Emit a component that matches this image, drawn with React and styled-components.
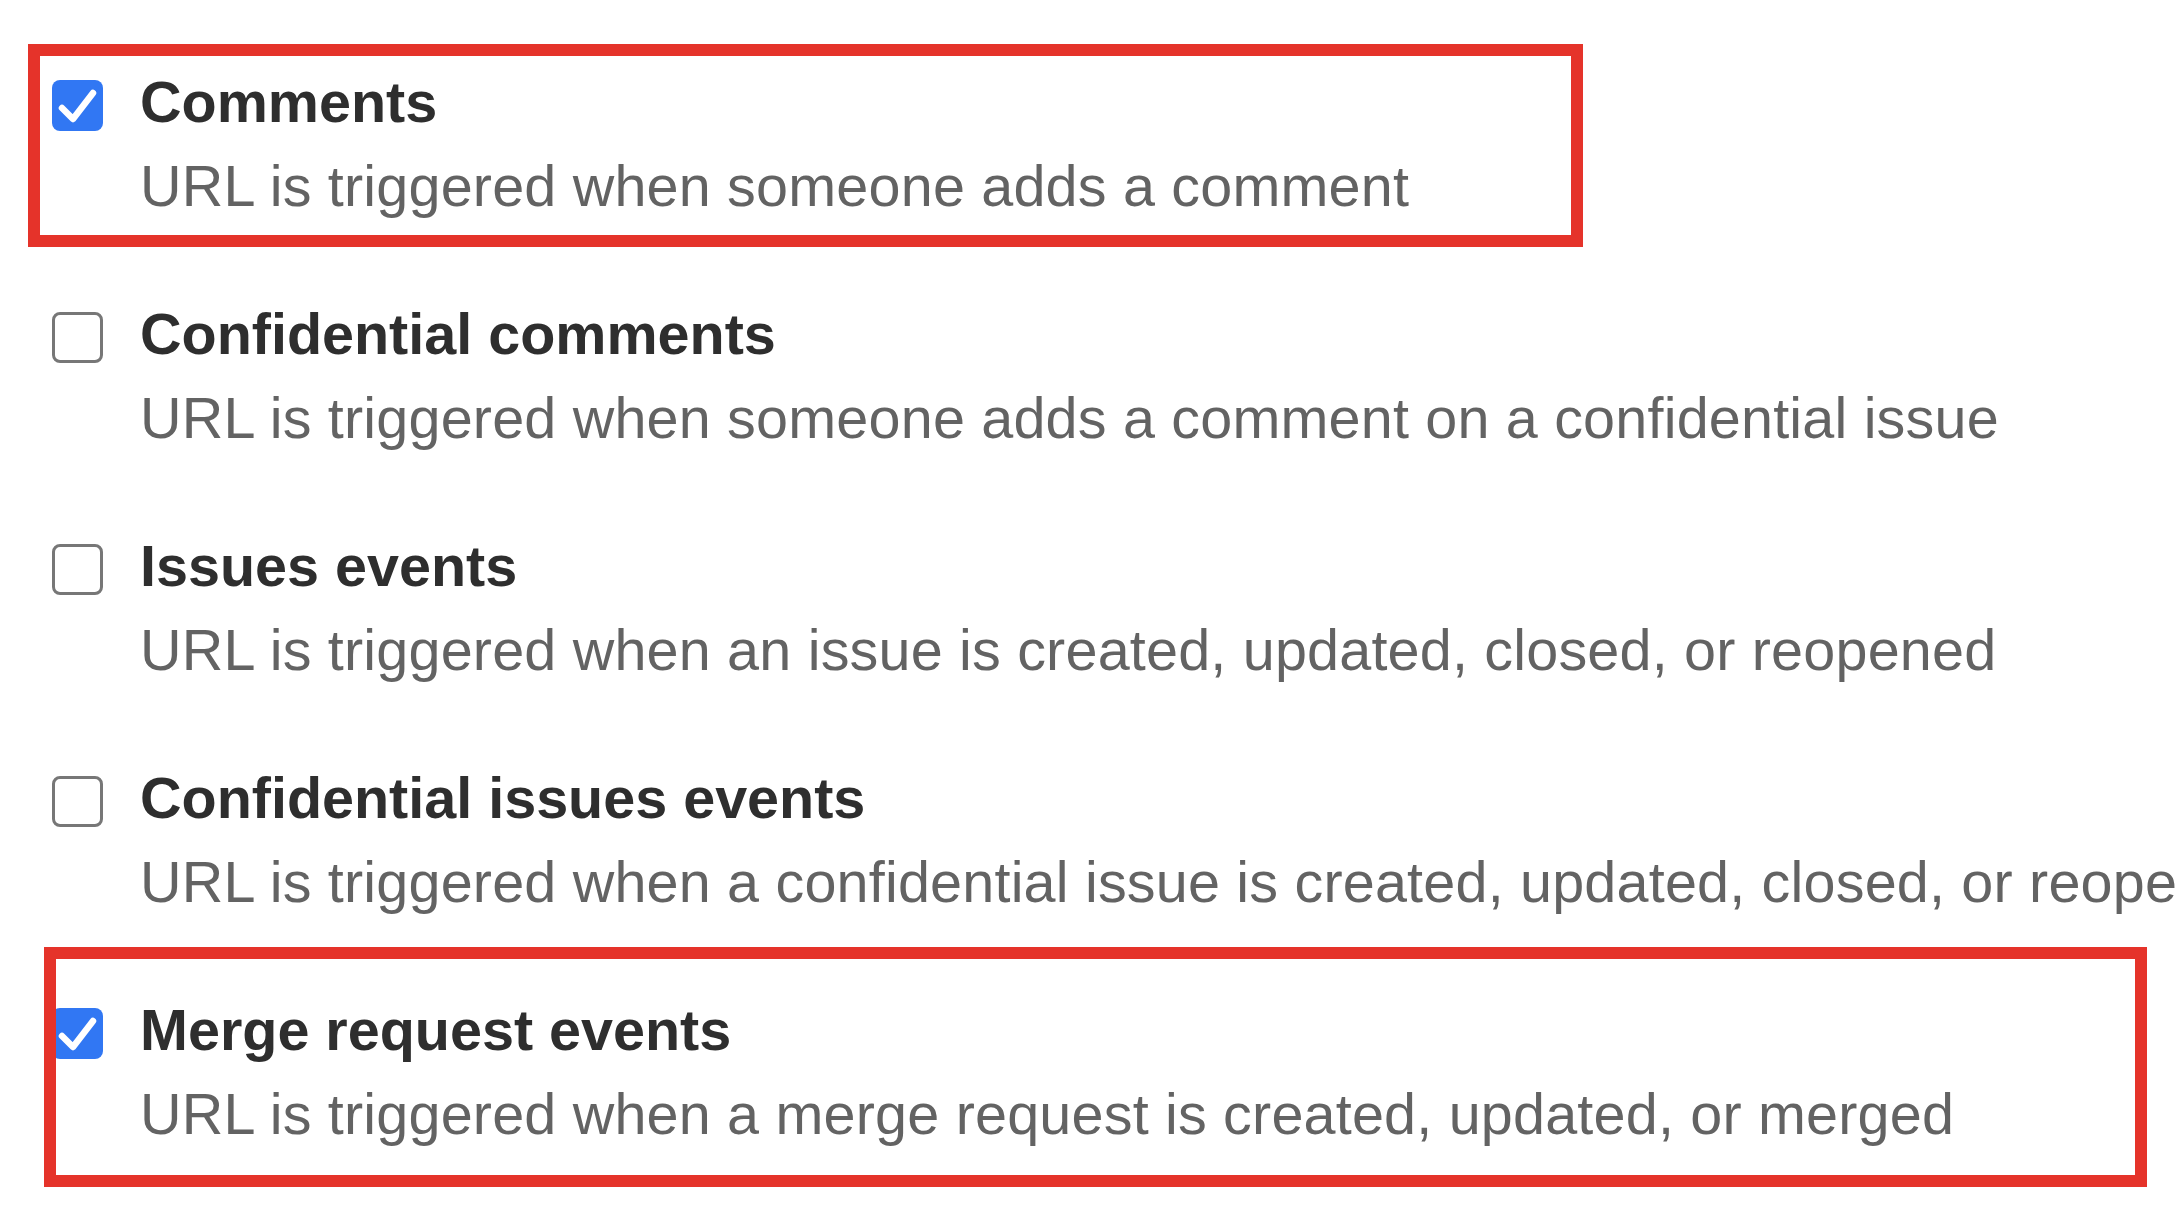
import styled, { createGlobalStyle } from "styled-components";

const GlobalStyle = createGlobalStyle`
  html, body {
    margin: 0;
    padding: 0;
    background: #ffffff;
    overflow: hidden;
  }
  body {
    font-family: "Liberation Sans", Arial, Helvetica, sans-serif;
  }
`;

const events = [
  {
    title: "Comments",
    desc: "URL is triggered when someone adds a comment",
    checked: true,
    mark: { left: -24, top: -16, width: 1555, height: 203 },
  },
  {
    title: "Confidential comments",
    desc: "URL is triggered when someone adds a comment on a confidential issue",
  },
  {
    title: "Issues events",
    desc: "URL is triggered when an issue is created, updated, closed, or reopened",
  },
  {
    title: "Confidential issues events",
    desc: "URL is triggered when a confidential issue is created, updated, closed, or reopened",
  },
  {
    title: "Merge request events",
    desc: "URL is triggered when a merge request is created, updated, or merged",
    checked: true,
    mark: { left: -8, top: -41, width: 2103, height: 240 },
  },
];

const Page = styled.div`
  width: 2178px;
  height: 1220px;
  box-sizing: border-box;
  padding: 60px 0 0 52px;
  display: flex;
  flex-direction: column;
  gap: 64px;
  overflow: hidden;
`;

const Row = styled.label`
  position: relative;
  display: flex;
  align-items: flex-start;
  gap: 37px;
`;

const Box = styled.span`
  flex: none;
  width: 51px;
  height: 51px;
  margin-top: 20px;
  box-sizing: border-box;
  border-radius: 8px;
  display: flex;
  align-items: center;
  justify-content: center;
  background: ${(p) => (p.$checked ? "#3177f3" : "#ffffff")};
  border: ${(p) => (p.$checked ? "none" : "3px solid #777777")};
`;

const Text = styled.div`
  display: flex;
  flex-direction: column;
  white-space: nowrap;
`;

const Title = styled.span`
  font-size: 57.5px;
  line-height: 84px;
  font-weight: 700;
  color: #2e2e2e;
`;

const Desc = styled.span`
  font-size: 57.5px;
  line-height: 84px;
  font-weight: 400;
  letter-spacing: 0.2px;
  color: #636363;
`;

const Mark = styled.span`
  position: absolute;
  left: ${(p) => p.$left}px;
  top: ${(p) => p.$top}px;
  width: ${(p) => p.$width}px;
  height: ${(p) => p.$height}px;
  box-sizing: border-box;
  border: 12px solid #e5332a;
  pointer-events: none;
`;

const Check = () => (
  <svg width="51" height="51" viewBox="0 0 51 51">
    <path
      d="M10 28 L21 39 L41 13"
      fill="none"
      stroke="#ffffff"
      strokeWidth="6.5"
      strokeLinecap="round"
      strokeLinejoin="round"
    />
  </svg>
);

export default function App() {
  return (
    <>
      <GlobalStyle />
      <Page>
        {events.map((ev) => (
          <Row key={ev.title}>
            <Box $checked={ev.checked}>{ev.checked && <Check />}</Box>
            <Text>
              <Title>{ev.title}</Title>
              <Desc>{ev.desc}</Desc>
            </Text>
            {ev.mark && (
              <Mark
                $left={ev.mark.left}
                $top={ev.mark.top}
                $width={ev.mark.width}
                $height={ev.mark.height}
              />
            )}
          </Row>
        ))}
      </Page>
    </>
  );
}
